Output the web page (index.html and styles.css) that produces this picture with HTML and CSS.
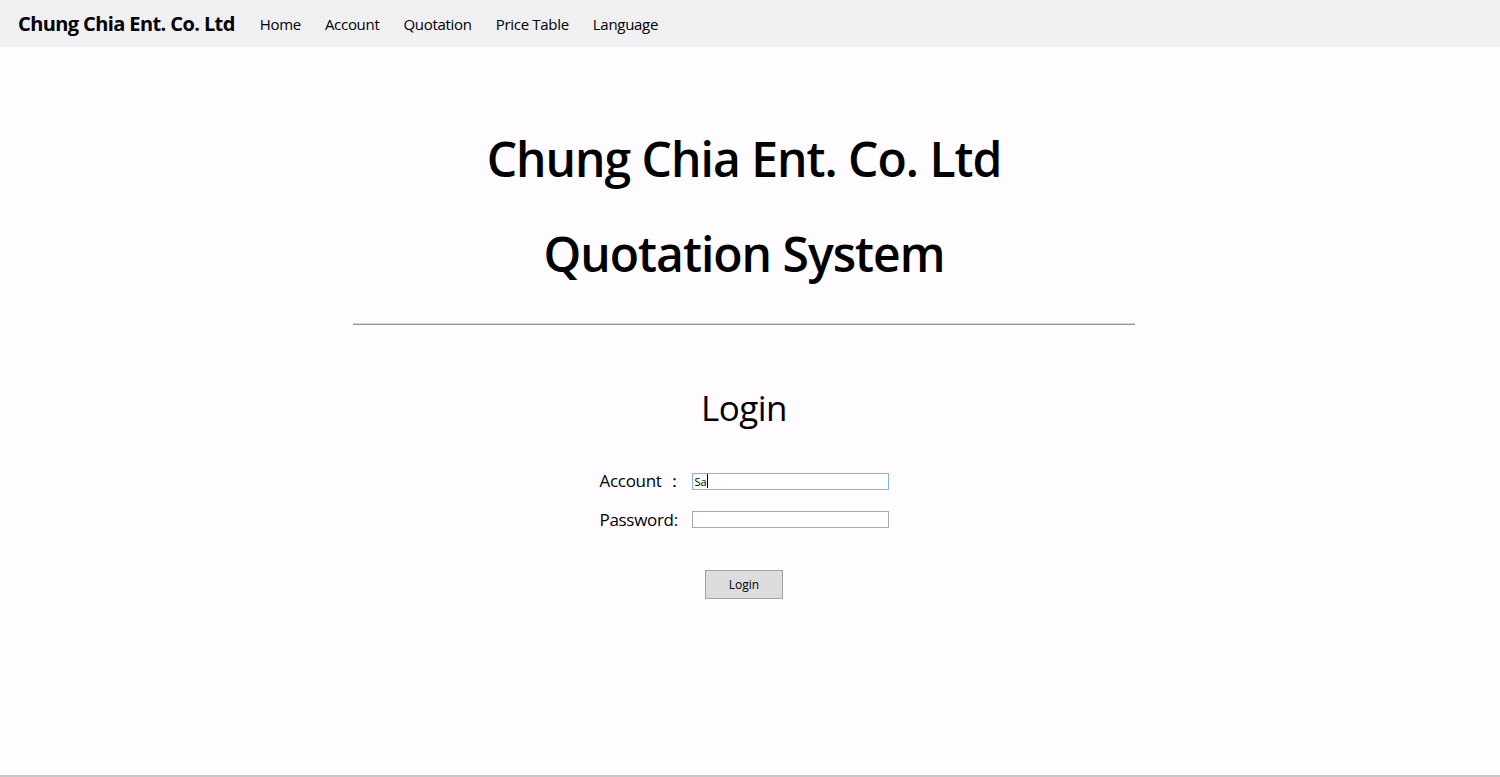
FILE: index.html
```html
<!DOCTYPE html>
<html lang="en">
<head>
<meta charset="utf-8">
<title>Chung Chia Ent. Co. Ltd</title>
<link rel="stylesheet" href="styles.css">
</head>
<body>
<nav class="navbar">
  <a class="brand" href="#">Chung Chia Ent. Co. Ltd</a>
  <ul class="nav-links">
    <li><a href="#">Home</a></li>
    <li><a href="#">Account</a></li>
    <li><a href="#">Quotation</a></li>
    <li><a href="#">Price Table</a></li>
    <li><a href="#">Language</a></li>
  </ul>
</nav>
<main class="page">
  <header class="hero">
    <h1 class="title">Chung Chia Ent. Co. Ltd</h1>
    <h1 class="title">Quotation System</h1>
  </header>
  <hr class="divider">
  <section class="login">
    <h2 class="login-title">Login</h2>
    <form class="login-form">
      <div class="row">
        <label class="label" for="acc">Account ：</label>
        <div class="input focused" id="acc"><span class="typed">Sa</span><span class="caret"></span></div>
      </div>
      <div class="row">
        <label class="label" for="pwd">Password:</label>
        <div class="input" id="pwd"></div>
      </div>
      <div class="actions">
        <button type="button" class="btn">Login</button>
      </div>
    </form>
  </section>
</main>
</body>
</html>
```
FILE: styles.css
```css
html, body {
  margin: 0;
  padding: 0;
  height: 100%;
}
body {
  background: #fefcfe;
  font-family: "Open Sans", "Noto Sans", sans-serif;
  color: #000;
  display: flex;
  flex-direction: column;
  border-bottom: 2px solid #c8c8c8;
  box-sizing: border-box;
}
.navbar {
  height: 47px;
  background: #f0eff1;
  display: flex;
  align-items: center;
  padding-left: 18px;
  flex-shrink: 0;
}
.brand {
  font-size: 20px;
  font-weight: 700;
  color: #000;
  text-decoration: none;
  letter-spacing: -0.6px;
  margin-right: 25px;
}
.nav-links {
  list-style: none;
  margin: 0;
  padding: 0;
  display: flex;
  gap: 24px;
}
.nav-links a {
  font-size: 15px;
  font-weight: 500;
  color: #000;
  text-decoration: none;
  letter-spacing: -0.3px;
}
.page {
  flex: 1;
  display: flex;
  flex-direction: column;
  align-items: center;
  padding-right: 12px;
}
.hero {
  padding-top: 83px;
  display: flex;
  flex-direction: column;
  align-items: center;
  gap: 37px;
}
.title {
  margin: 0;
  font-size: 48px;
  font-weight: 600;
  line-height: 58px;
  letter-spacing: -1px;
}
.divider {
  width: 782px;
  margin: 40px 0 0;
  border: 0;
  border-top: 1px solid #d4d4d4;
  border-bottom: 1px solid #969696;
  height: 0;
}
.login {
  display: flex;
  flex-direction: column;
  align-items: center;
}
.login-title {
  margin: 61px 0 0;
  font-size: 35px;
  font-weight: 400;
  line-height: 44px;
  letter-spacing: -0.5px;
}
.login-form {
  margin-top: 32px;
  display: flex;
  flex-direction: column;
  align-items: center;
}
.row {
  display: flex;
  align-items: center;
  height: 38px;
}
.label {
  width: 92px;
  font-size: 17px;
  letter-spacing: -0.3px;
}
.input {
  width: 193px;
  height: 15px;
  border: 1px solid #a9a9a9;
  background: #fff;
  display: flex;
  align-items: center;
  font-size: 11px;
  padding-left: 2px;
  box-sizing: content-box;
}
.input.focused {
  border-color: #7eb4ea;
}
.caret {
  display: inline-block;
  width: 1px;
  height: 14px;
  background: #000;
}
.actions {
  margin-top: 32px;
}
.btn {
  width: 78px;
  height: 29px;
  background: #dddcdf;
  border: 1px solid #a3a3a3;
  font-family: "Open Sans", sans-serif;
  font-size: 12px;
  color: #000;
  padding: 0;
}
```
